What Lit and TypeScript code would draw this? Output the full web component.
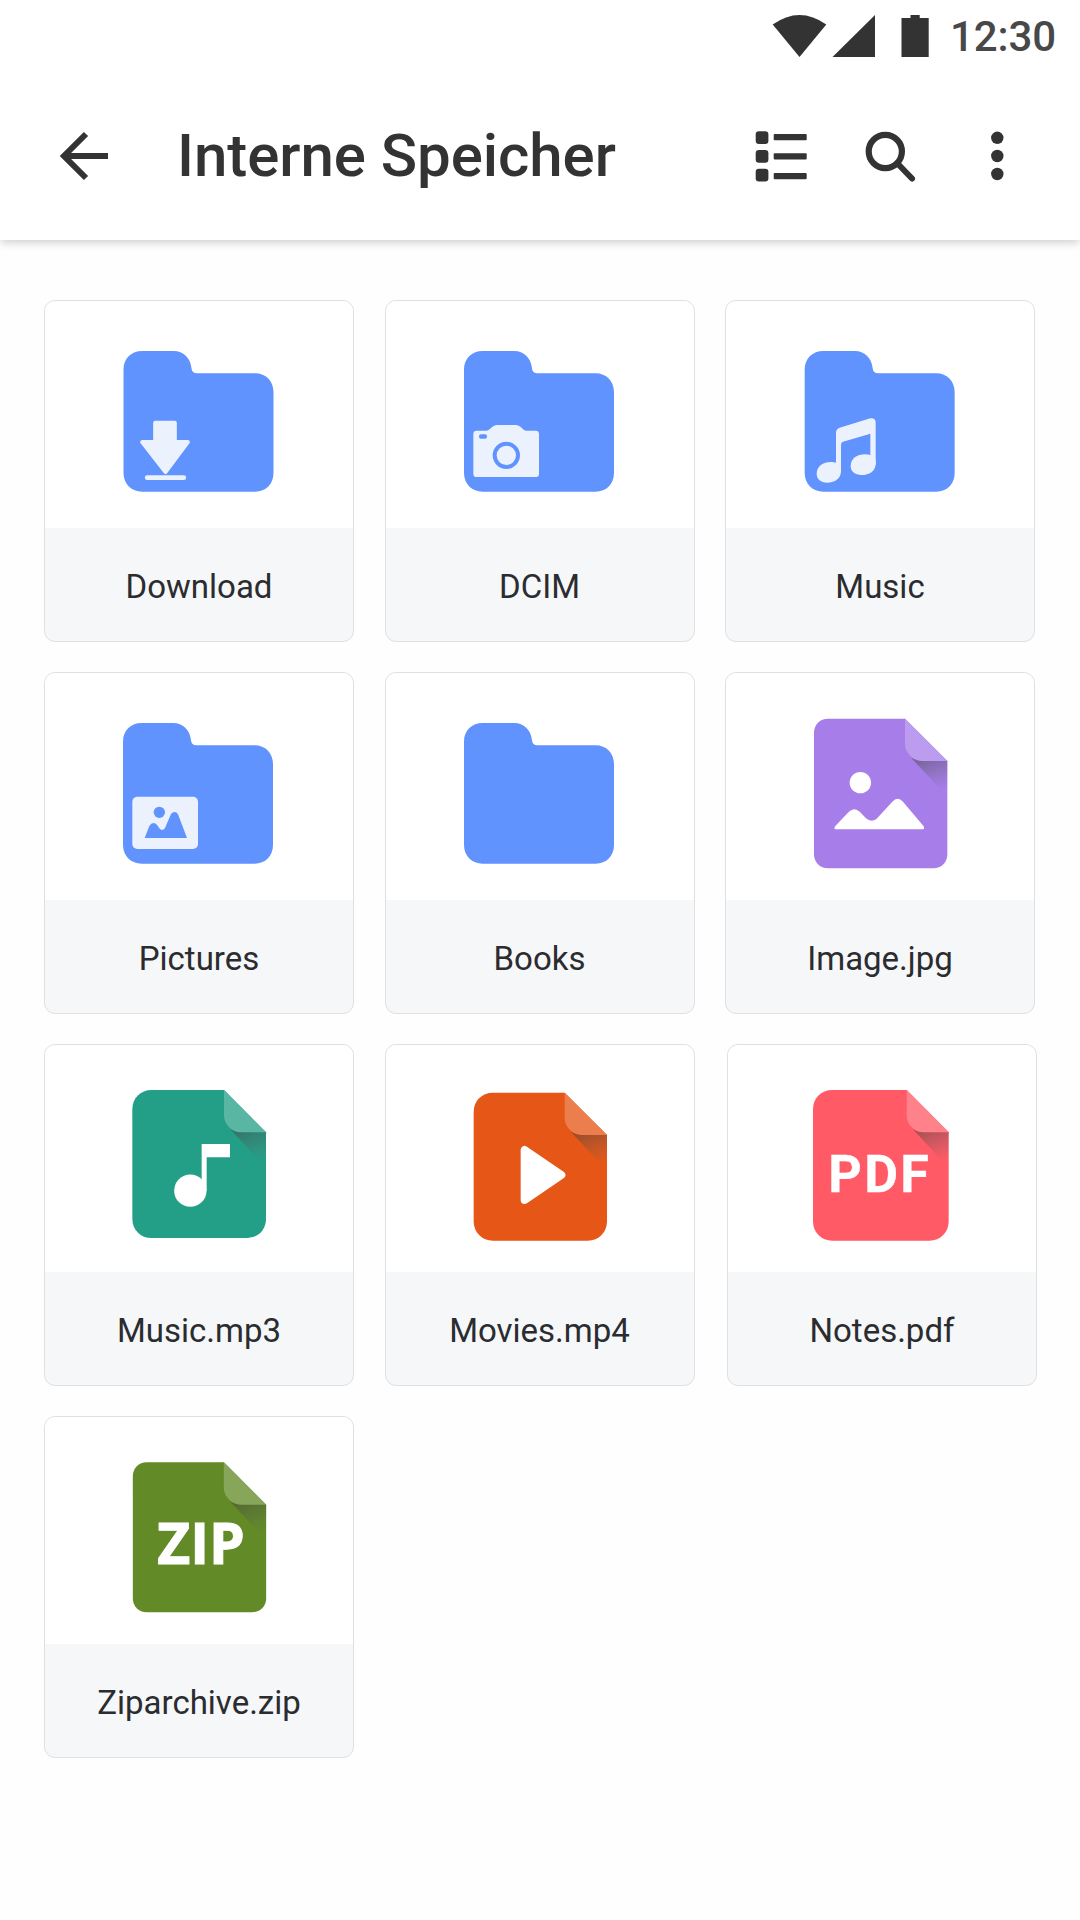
import { LitElement, html, svg, css } from "lit";
import { customElement, property } from "lit/decorators.js";

type Kind =
  | "download" | "camera" | "music" | "pictures" | "folder"
  | "jpg" | "mp3" | "mp4" | "pdf" | "zip";

interface Entry {
  name: string;
  kind: Kind;
}

const ENTRIES: Entry[] = [
  { name: "Download", kind: "download" },
  { name: "DCIM", kind: "camera" },
  { name: "Music", kind: "music" },
  { name: "Pictures", kind: "pictures" },
  { name: "Books", kind: "folder" },
  { name: "Image.jpg", kind: "jpg" },
  { name: "Music.mp3", kind: "mp3" },
  { name: "Movies.mp4", kind: "mp4" },
  { name: "Notes.pdf", kind: "pdf" },
  { name: "Ziparchive.zip", kind: "zip" },
];

/* Folder silhouette shared by all directories. */
const folder = svg`<path fill="#6193ff" d="M237 208C237 174 261 152 293 152H388C416 152 438 172 441 204C442 214 447 219 458 219H632C664 219 687 243 687 275V518C687 551 664 574 632 574H293C261 574 237 551 237 518Z"/>`;

/* Paper sheet with a turned corner; coordinates are its outer edges. */
const sheet = (
  color: string, l: number, t: number, r: number, b: number,
  rad: number, fold: number, light = 0.24,
) => {
  const fy = t + 127;
  const k = rad * 0.42;
  return svg`
    <defs>
      <linearGradient id="shade" gradientUnits="userSpaceOnUse" x1=${fold + 42} y1=${fy} x2=${fold + 82} y2=${fy + 98}>
        <stop offset="0" stop-color="#444" stop-opacity=".44"/>
        <stop offset=".5" stop-color="#555" stop-opacity=".24"/>
        <stop offset="1" stop-color="#666" stop-opacity="0"/>
      </linearGradient>
    </defs>
    <path fill=${color} d="M${l + rad} ${t}H${fold}L${r} ${fy}V${b - rad}C${r} ${b - k} ${r - k} ${b} ${r - rad} ${b}H${l + rad}C${l + k} ${b} ${l} ${b - k} ${l} ${b - rad}V${t + rad}C${l} ${t + k} ${l + k} ${t} ${l + rad} ${t}Z"/>
    <path fill="url(#shade)" d="M${fold + 18} ${fy - 10}L${r} ${fy + 106}V${fy - 2}H${fold + 40}Z"/>
    <path fill=${color} d="M${fold} ${t}V${fy - 50}C${fold} ${fy - 24} ${fold + 24} ${fy} ${fold + 50} ${fy}H${r}Z"/>
    <path fill="#fff" fill-opacity=${light} d="M${fold} ${t}V${fy - 50}C${fold} ${fy - 24} ${fold + 24} ${fy} ${fold + 50} ${fy}H${r}Z"/>`;
};

const art = (kind: Kind) => {
  switch (kind) {
    case "folder":
      return folder;
    case "download":
      return svg`${folder}
        <path fill="#ebf2fd" stroke="#ebf2fd" stroke-width="12" stroke-linejoin="round" d="M332 367H391V425H430L363 515L293 425H332Z"/>
        <rect x="301" y="525" width="124" height="14" rx="7" fill="#ebf2fd"/>`;
    case "camera":
      return svg`${folder}
        <path fill="#ebf2fd" d="M275 391H303C317 391 320 374 337 374H392C409 374 411 391 425 391H452Q462 391 462 401V520Q462 530 452 530H275Q265 530 265 520V401Q265 391 275 391Z"/>
        <circle cx="364" cy="465" r="35" fill="none" stroke="#6193ff" stroke-width="12"/>
        <rect x="282" y="402" width="24" height="13" rx="6" fill="#6193ff"/>`;
    case "music":
      return svg`${folder}
        <path fill="#ebf2fd" d="M331 397Q331 386 342 382L434 354Q449 352 450 366V493H434V400L352 424Q346 426 346 433V516H331Z"/>
        <path fill="#ebf2fd" d="M273 520C273 498 292 485 316 485Q325 485 331 487L346 500V512C346 534 328 547 304 547C286 547 273 536 273 520Z"/>
        <path fill="#ebf2fd" d="M375 497C375 475 394 462 418 462Q428 462 434 464L450 478V490C450 512 431 524 407 524C388 524 375 513 375 497Z"/>`;
    case "pictures":
      return svg`${folder}
        <rect x="265" y="373" width="197" height="157" rx="15" fill="#ebf2fd"/>
        <circle cx="346" cy="420" r="17" fill="#6193ff"/>
        <path fill="#6193ff" d="M302 497L316 461Q321 452 329 452Q336 452 341 460L346 468Q355 479 363 467L381 425Q385 419 392 419Q398 419 402 426L429 497Z"/>`;
    case "jpg":
      return svg`${sheet("#a67de9", 265, 139, 665, 588, 42, 538)}
        <circle cx="404" cy="331" r="32" fill="#fff"/>
        <path fill="#fff" d="M329 471Q324 468 329 461L369 419Q386 402 403 419L421 438Q437 452 453 439L500 388Q516 370 532 388L594 462Q598 468 593 471Z"/>`;
    case "mp3":
      return svg`${sheet("#249f87", 265, 137, 666, 581, 58, 540)}
        <circle cx="439" cy="439" r="48.5" fill="#fff"/>
        <path fill="#fff" d="M473 299H558V339H488V439H473Z"/>`;
    case "mp4":
      return svg`${sheet("#e65616", 266, 145, 666, 589, 58, 539)}
        <path fill="#fff" stroke="#fff" stroke-width="24" stroke-linejoin="round" d="M419 317V467L529 392Z"/>`;
    case "pdf":
      return svg`${sheet("#ff5a66", 258, 137, 665, 589, 58, 539)}
        <text x="304" y="443" font-size="156" letter-spacing="7" class="tag plain">PDF</text>`;
    case "zip":
      return svg`${sheet("#628a26", 265, 138, 665, 588, 42, 538)}
        <text x="338" y="443" font-size="171" class="tag">ZIP</text>`;
  }
};

const OFFSET: Partial<Record<Kind, number>> = { download: 1.5, music: 2, jpg: 2, zip: 1.5 };

@customElement("file-card")
class FileCard extends LitElement {
  @property() name = "";
  @property() kind: Kind = "folder";

  static styles = css`
    :host { display: block; }
    .card {
      box-sizing: border-box;
      width: 310px;
      height: 342px;
      border: 1.5px solid #dfe0e2;
      border-radius: 11px;
      background: #f6f7f9;
      overflow: hidden;
      display: flex;
      flex-direction: column;
    }
    .preview { height: 227px; background: #fff; display: flex; justify-content: center; }
    .art { flex: none; width: 310px; height: 228px; margin-top: -1px; }
    .tag {
      font-family: "Open Sans", "Noto Sans", sans-serif;
      font-weight: 700;
      fill: #fff;
      stroke: #fff;
      stroke-width: 3;
    }
    .plain { font-family: Roboto, sans-serif; stroke-width: 1; }
    .label {
      flex: 1;
      display: flex;
      align-items: center;
      justify-content: center;
      padding-top: 5px;
      color: #2b2c2f;
      font-size: 33px;
      line-height: 40px;
    }
  `;

  render() {
    return html`
      <div class="card">
        <div class="preview">
          <svg class="art" viewBox="${-(OFFSET[this.kind] ?? 0)} -1 930 684">${art(this.kind)}</svg>
        </div>
        <div class="label">${this.name}</div>
      </div>
    `;
  }
}

@customElement("app-root")
class AppRoot extends LitElement {
  static styles = css`
    :host {
      display: block;
      width: 1080px;
      min-height: 1920px;
      background: #fefefe;
      font-family: Roboto, sans-serif;
    }
    .top { height: 240px; background: #fff; box-shadow: 0 4px 8px -1px rgba(0, 0, 0, 0.18); }
    .status {
      display: flex;
      justify-content: flex-end;
      height: 72px;
      box-sizing: border-box;
      padding: 11px 24px 0 0;
      color: #484848;
      font-size: 42px;
      font-weight: 500;
      line-height: 52px;
      letter-spacing: -0.1px;
    }
    .signals { width: 160px; height: 50px; margin-right: 20px; }
    .bar { display: flex; align-items: center; height: 168px; color: #333; }
    .back { width: 50px; height: 50px; margin-left: 59px; }
    .title {
      margin: 0 0 0 68px;
      font-size: 60px;
      font-weight: 500;
      line-height: 72px;
      letter-spacing: -0.05px;
      flex: 1;
      white-space: nowrap;
    }
    .actions { width: 260px; height: 60px; margin-right: 70px; }
    .grid {
      display: grid;
      grid-template-columns: repeat(3, 310px);
      gap: 30px 30.5px;
      padding: 60px 0 0 44px;
    }
    .nudged { margin-left: 2px; }
  `;

  render() {
    return html`
      <header class="top">
        <div class="status">
          <svg class="signals" viewBox="770 11 160 50" fill="#333">
            <path d="M772.7 24.5Q799.5 5.500 826.300 24.500L799.500 57Z"/>
            <path d="M832.500 57L875 15V57Z"/>
            <path d="M901.500 18H910.500V15H919.700V18H928.700V57H901.500Z"/>
          </svg>
          <span>12:30</span>
        </div>
        <div class="bar">
          <svg class="back" viewBox="59 131 50 50" fill="none" stroke="#333" stroke-width="6">
            <path d="M86 134L64 156L86 178M64 156H108"/>
          </svg>
          <h1 class="title">Interne Speicher</h1>
          <svg class="actions" viewBox="750 126 260 60" fill="#333">
            <rect x="755.700" y="131.200" width="12.700" height="12.700" rx="3.200"/>
            <rect x="755.700" y="150" width="12.700" height="12.700" rx="3.200"/>
            <rect x="755.700" y="168.800" width="12.700" height="12.700" rx="3.200"/>
            <rect x="773.700" y="134" width="33" height="6.200" rx="1"/>
            <rect x="773.700" y="153.300" width="33" height="6.200" rx="1"/>
            <rect x="773.700" y="173" width="33" height="6.200" rx="1"/>
            <circle cx="885.300" cy="151.500" r="16.600" fill="none" stroke="#333" stroke-width="6.200"/>
            <path d="M897.500 163.500L912 178.500" stroke="#333" stroke-width="6" stroke-linecap="round"/>
            <circle cx="997.300" cy="137.800" r="6.200"/>
            <circle cx="997.300" cy="156" r="6.200"/>
            <circle cx="997.300" cy="174" r="6.200"/>
          </svg>
        </div>
      </header>
      <main class="grid">
        ${ENTRIES.map(
          (e) => html`<file-card
            class=${e.kind === "pdf" ? "nudged" : ""}
            .name=${e.name}
            .kind=${e.kind}
          ></file-card>`,
        )}
      </main>
    `;
  }
}
